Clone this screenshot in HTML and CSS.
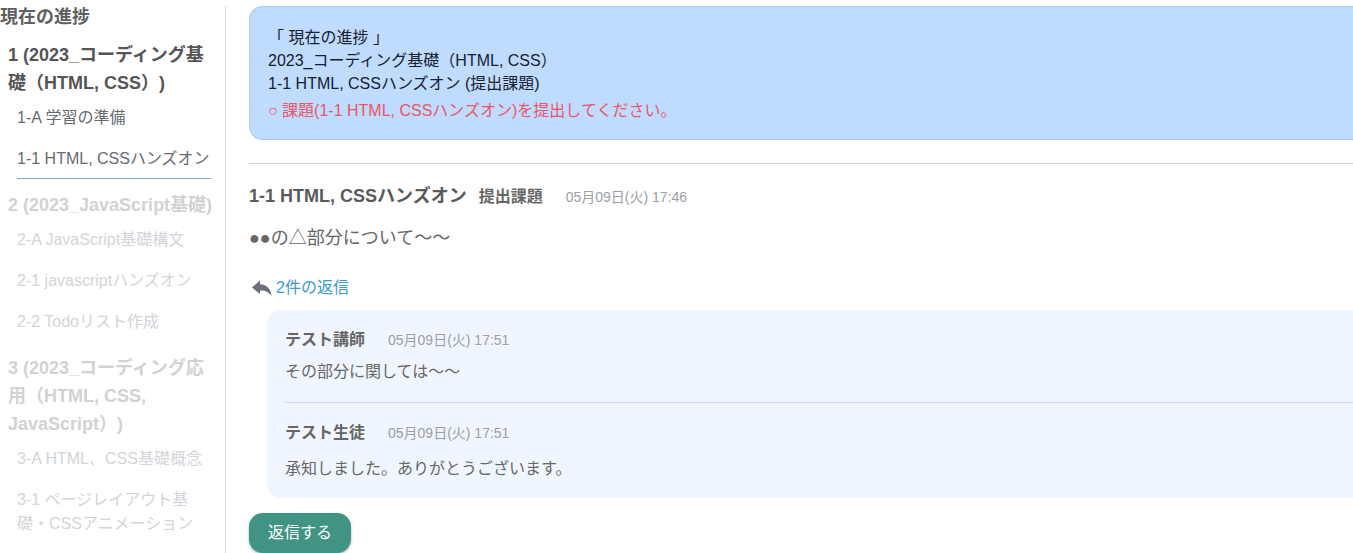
FILE: index.html
```html
<!DOCTYPE html>
<html lang="ja">
<head>
<meta charset="utf-8">
<meta name="viewport" content="width=device-width, initial-scale=1">
<title>現在の進捗</title>
<link rel="stylesheet" href="styles.css">
</head>
<body>
<div class="layout">
  <nav class="sidebar" aria-label="現在の進捗">
    <h2 class="sidebar-title">現在の進捗</h2>
    <section class="chapter">
      <h3 class="chapter-title">1 (2023_コーディング基礎（HTML, CSS）)</h3>
      <ul class="lessons">
        <li><a class="lesson" href="#">1-A 学習の準備</a></li>
        <li><a class="lesson current" href="#" aria-current="page">1-1 HTML, CSSハンズオン</a></li>
      </ul>
    </section>
    <section class="chapter locked">
      <h3 class="chapter-title">2 (2023_JavaScript基礎)</h3>
      <ul class="lessons">
        <li><a class="lesson" href="#">2-A JavaScript基礎構文</a></li>
        <li><a class="lesson" href="#">2-1 javascriptハンズオン</a></li>
        <li><a class="lesson" href="#">2-2 Todoリスト作成</a></li>
      </ul>
    </section>
    <section class="chapter locked">
      <h3 class="chapter-title">3 (2023_コーディング応用（HTML, CSS, JavaScript）)</h3>
      <ul class="lessons">
        <li><a class="lesson" href="#">3-A HTML、CSS基礎概念</a></li>
        <li><a class="lesson" href="#">3-1 ページレイアウト基礎・CSSアニメーション</a></li>
      </ul>
    </section>
  </nav>
  <main class="content">
    <section class="notice">
      <p>「 現在の進捗 」</p>
      <p>2023_コーディング基礎（HTML, CSS）</p>
      <p>1-1 HTML, CSSハンズオン (提出課題)</p>
      <p class="notice-alert">○ 課題(1-1 HTML, CSSハンズオン)を提出してください。</p>
    </section>
    <article class="post">
      <header class="post-header">
        <h1 class="post-title">1-1 HTML, CSSハンズオン</h1>
        <span class="post-kind">提出課題</span>
        <time class="date post-date">05月09日(火) 17:46</time>
      </header>
      <p class="post-body">●●の△部分について〜〜</p>
      <a class="reply-link" href="#replies">
        <svg class="reply-icon" viewBox="0 0 20 16" aria-hidden="true"><path d="M8 0.5 L0 7.5 L8 14 V10.5 C13 10.3 16.5 11.5 19.5 16 C19 9 15 4.5 8 4.2 Z"/></svg>
        <span>2件の返信</span>
      </a>
      <div class="replies" id="replies">
        <div class="reply">
          <div class="reply-header"><strong>テスト講師</strong><time class="date">05月09日(火) 17:51</time></div>
          <p>その部分に関しては〜〜</p>
        </div>
        <div class="reply">
          <div class="reply-header"><strong>テスト生徒</strong><time class="date">05月09日(火) 17:51</time></div>
          <p>承知しました。ありがとうございます。</p>
        </div>
      </div>
      <button class="reply-button" type="button">返信する</button>
    </article>
  </main>
</div>
</body>
</html>
```
FILE: styles.css
```css
* {
  box-sizing: border-box;
}

body, h1, h2, h3, p, ul {
  margin: 0;
  padding: 0;
}

body {
  background: #fff;
  color: #666;
  font-family: "Liberation Sans", "Noto Sans CJK JP", sans-serif;
  font-size: 16px;
  line-height: 24px;
  text-spacing-trim: space-all;
}

ul {
  list-style: none;
}

a {
  color: inherit;
  text-decoration: none;
}

.layout {
  display: flex;
  min-height: 100vh;
  padding-top: 6px;
}

.sidebar {
  flex: 0 0 226px;
  border-right: 1px solid #d8d9dc;
}

.sidebar-title {
  color: #5f5f5f;
  font-size: 18px;
  line-height: 23px;
}

.chapter {
  margin-top: 12px;
  padding-left: 8px;
}

.chapter-title {
  padding-right: 8px;
  color: #555;
  font-size: 18px;
  line-height: 28px;
}

.lessons {
  padding: 0 14px 0 9px;
}

.lesson {
  display: block;
  padding: 9px 0 7px;
  border-bottom: 1px solid transparent;
  color: #666b72;
}

.lesson.current {
  border-color: #7fa8c8;
  white-space: nowrap;
}

.locked .chapter-title {
  color: #d2d2d2;
}

.locked .lesson {
  color: #d2d5d9;
}

.content {
  flex: 1;
  min-width: 0;
  padding-left: 23px;
}

.notice {
  padding: 19px 18px 17px;
  border: 1px solid #a3cae8;
  border-right: 0;
  border-radius: 14px 0 0 14px;
  background: #bfdbfe;
  color: #17202e;
  line-height: 23px;
}

.notice-alert {
  margin-top: 4px;
  color: #ec5565;
}

.post {
  margin-top: 23px;
  padding-top: 18px;
  border-top: 1px solid #d0d1d4;
}

.post-header {
  display: flex;
  align-items: baseline;
  line-height: 28px;
}

.post-title {
  color: #5a5a5a;
  font-size: 18px;
}

.post-kind {
  margin-left: 12px;
  font-weight: bold;
}

.date {
  color: #9b9ea6;
  font-size: 14px;
}

.post-date {
  margin-left: 23px;
}

.post-body {
  margin-top: 13px;
  font-size: 18px;
  line-height: 28px;
}

.reply-link {
  display: inline-flex;
  align-items: center;
  gap: 4px;
  margin-top: 24px;
  padding-left: 3px;
  color: #3b9bcb;
}

.reply-icon {
  width: 20px;
  height: 16px;
  fill: #6b7078;
}

.replies {
  margin: 7px 0 0 18px;
  padding: 18px 0 17px 18px;
  border-radius: 14px 0 0 14px;
  background: #eff6ff;
}

.reply-header {
  display: flex;
  align-items: center;
  gap: 23px;
}

.reply p {
  margin-top: 8px;
}

.reply + .reply {
  margin-top: 18px;
  padding-top: 18px;
  border-top: 1px solid #d3dae5;
}

.reply + .reply p {
  margin-top: 12px;
}

.reply-button {
  display: block;
  margin-top: 15px;
  padding: 8px 19px;
  border: 0;
  border-radius: 14px;
  background: #419383;
  box-shadow: 0 1px 3px rgba(0, 0, 0, 0.3);
  color: #fff;
  font: inherit;
}
```
